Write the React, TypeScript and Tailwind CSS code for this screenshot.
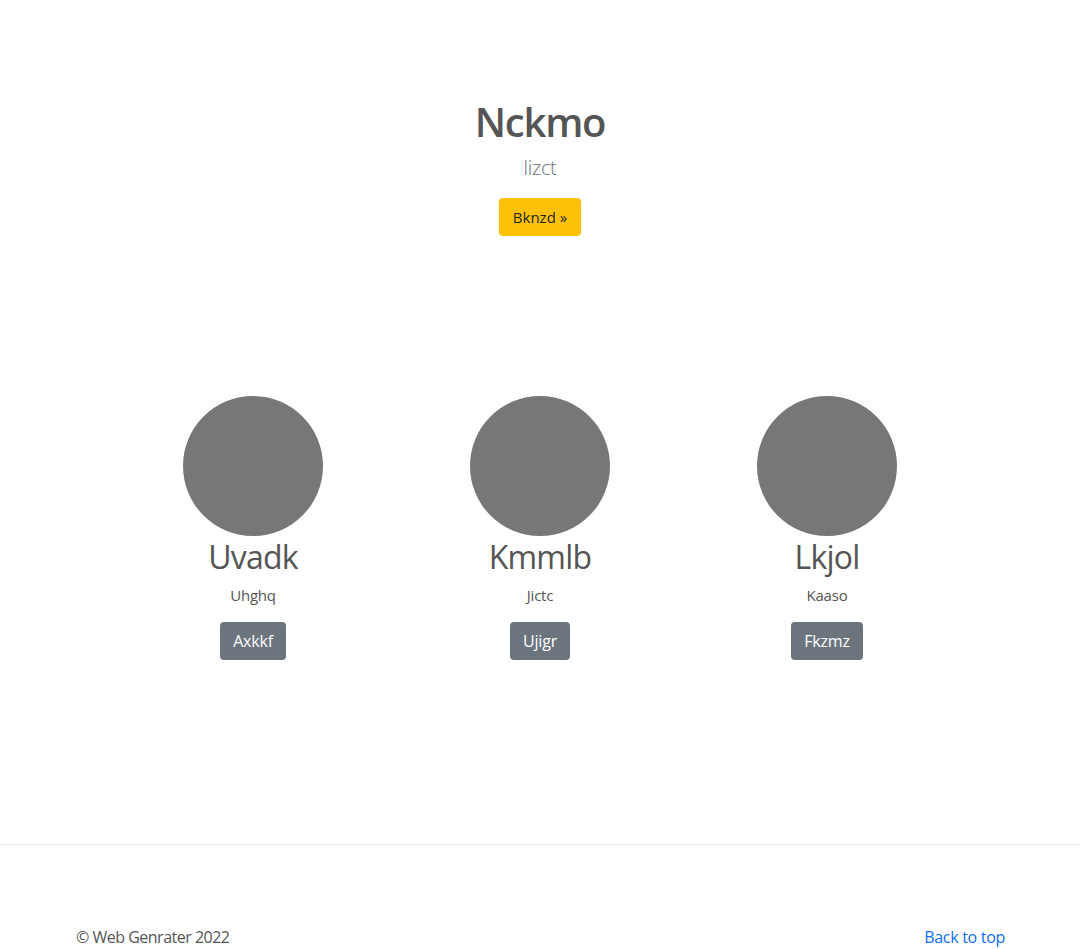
import React from 'react';

const cards = [
  { title: 'Uvadk', text: 'Uhghq', btn: 'Axkkf' },
  { title: 'Kmmlb', text: 'Jictc', btn: 'Ujigr' },
  { title: 'Lkjol', text: 'Kaaso', btn: 'Fkzmz' },
];

export default function App() {
  return (
    <div className="min-h-[949px] bg-white text-[#555] font-['Open_Sans',sans-serif]">
      <section className="pt-[98px] text-center">
        <h1 className="text-[40px] leading-[48px] font-semibold tracking-[-1.2px]">Nckmo</h1>
        <p className="mt-[7px] text-[20px] leading-[30px] font-light text-[#6c757d] tracking-[-0.3px]">lizct</p>
        <button className="mt-[15px] h-[38px] w-[82px] rounded bg-[#ffc107] text-[15px] text-[#212529]">
          Bknzd »
        </button>
      </section>

      <section className="mt-[160px] mx-auto w-[861px] grid grid-cols-3">
        {cards.map((c) => (
          <div key={c.title} className="flex flex-col items-center">
            <div className="w-[140px] h-[140px] rounded-full bg-[#777]" />
            <h2 className="mt-[2px] text-[32px] leading-[38px] font-normal tracking-[-0.8px]">{c.title}</h2>
            <p className="mt-[8px] text-[15px] leading-[22px] tracking-[-0.2px]">{c.text}</p>
            <button className="mt-[16px] h-[38px] px-[13px] rounded bg-[#6c757d] text-white text-[16px] tracking-[-0.2px]">
              {c.btn}
            </button>
          </div>
        ))}
      </section>

      <hr className="mt-[184px] border-t border-[#e5e5e5]" />

      <footer className="mt-[80px] px-[75px] flex justify-between text-[16px] leading-6">
        <p className="pl-px tracking-[-0.5px]">© Web Genrater 2022</p>
        <a href="#" className="text-[#0d6efd] tracking-[-0.3px]">Back to top</a>
      </footer>
    </div>
  );
}
